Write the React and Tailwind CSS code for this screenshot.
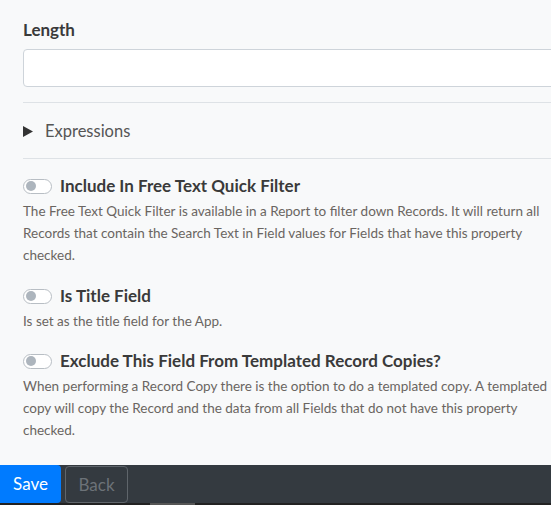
import React from "react";

function Toggle() {
  return (
    <span className="flex h-[15px] w-[29px] shrink-0 items-center rounded-full border border-[#b8bec4] bg-white px-[2px]">
      <span className="h-[10px] w-[10px] rounded-full bg-[#adb5bd]" />
    </span>
  );
}

function Prop({ title, children, className = "" }) {
  return (
    <div className={className}>
      <div className="flex items-center gap-[8px] h-[24px]">
        <Toggle />
        <span className="text-[17px] font-bold text-[#3a3a3a] leading-[24px] whitespace-nowrap">{title}</span>
      </div>
      <p className="mt-[2px] w-[528px] text-[13.5px] leading-[22px] text-[#6a6561]">{children}</p>
    </div>
  );
}

export default function App() {
  return (
    <div
      className="flex h-[505px] w-[551px] flex-col overflow-hidden bg-[#f8f9fa]"
      style={{ fontFamily: "Lato, 'Noto Sans', sans-serif" }}
    >
      <div className="flex-1 overflow-hidden pl-[23px]">
        <div className="w-[528px] pt-[18px]">
          <div className="text-[17px] font-bold leading-[24px] text-[#3a3a3a]">Length</div>
          <div className="mt-[7px] h-[38px] w-[560px] rounded-[4px] border border-[#ced4da] bg-white" />
          <div className="mt-[15px] h-px w-[560px] bg-[#dee2e6]" />
          <div className="mt-[16px] flex h-[24px] items-center">
            <svg width="10" height="11" viewBox="0 0 10 11" className="shrink-0">
              <path d="M0 0 L10 5.5 L0 11 Z" fill="#333" />
            </svg>
            <span className="ml-[12px] text-[16.5px] leading-[24px] text-[#555]">Expressions</span>
          </div>
          <div className="mt-[15px] h-px w-[560px] bg-[#dee2e6]" />
          <Prop title="Include In Free Text Quick Filter" className="mt-[15px]">
            The Free Text Quick Filter is available in a Report to filter down Records. It will return all Records that contain the Search Text in Field values for Fields that have this property checked.
          </Prop>
          <Prop title="Is Title Field" className="mt-[18px]">
            Is set as the title field for the App.
          </Prop>
          <Prop title="Exclude This Field From Templated Record Copies?" className="mt-[17px]">
            When performing a Record Copy there is the option to do a templated copy. A templated copy will copy the Record and the data from all Fields that do not have this property checked.
          </Prop>
        </div>
      </div>
      <div className="flex h-[40px] shrink-0 flex-col bg-[#343a40]">
        <div className="flex h-[38px] gap-[4px]">
          <button className="h-[38px] w-[61px] rounded-r-[4px] bg-[#007bff] text-[17px] text-white">Save</button>
          <button className="mt-px h-[37px] w-[63px] rounded-[4px] border border-[#5f656b] text-[17px] text-[#6c7278]">Back</button>
        </div>
        <div className="flex h-[2px] bg-[#222]">
          <div className="ml-[150px] h-[2px] w-[45px] bg-[#555]" />
        </div>
      </div>
    </div>
  );
}
